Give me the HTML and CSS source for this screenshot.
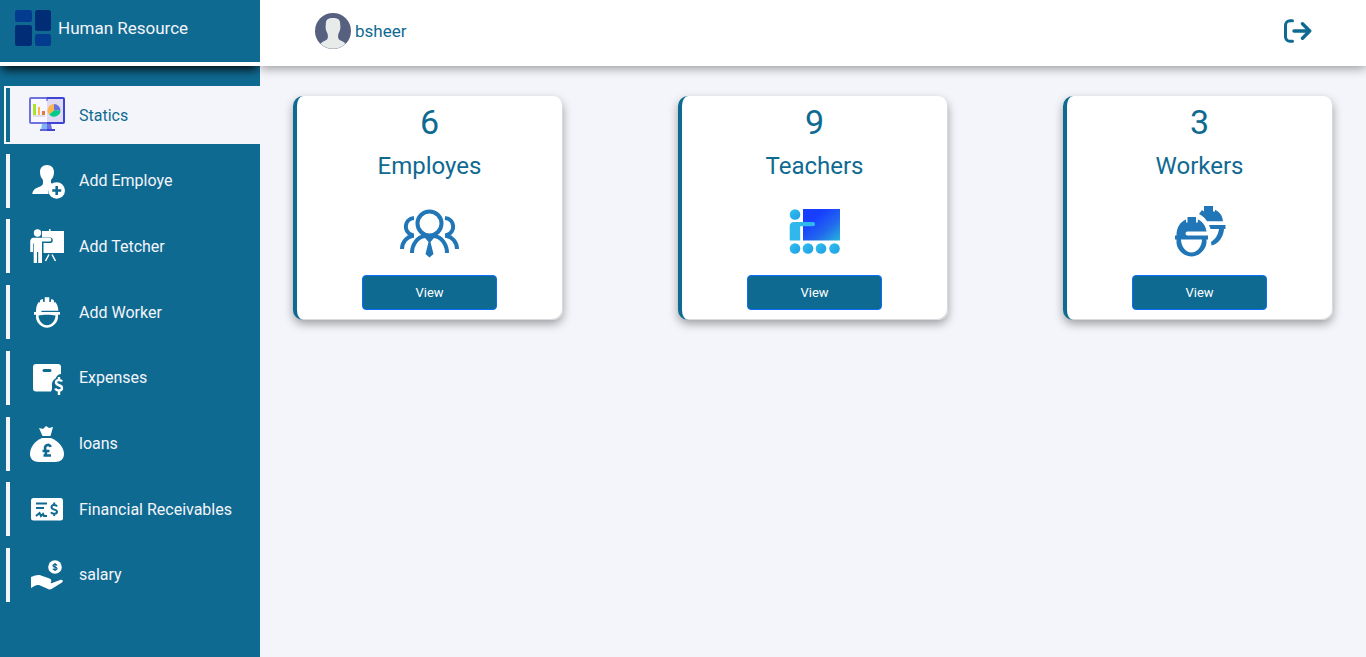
FILE: index.html
```html
<!DOCTYPE html>
<html lang="en">
<head>
<meta charset="utf-8">
<title>Human Resource</title>
<link rel="stylesheet" href="styles.css">
</head>
<body>
<div class="app">
  <aside class="sidebar">
    <div class="brand">
      <svg class="icon" viewBox="0 0 36 36" aria-hidden="true">
        <g fill="#033b8e"><rect width="17" height="12" rx="2.5"/><rect x="20" y="24" width="16" height="12" rx="2.5"/></g>
        <g fill="#002d76"><rect x="20" width="16" height="21" rx="2.5"/><rect y="15" width="17" height="21" rx="2.5"/></g>
      </svg>
      <span class="brand-name">Human Resource</span>
    </div>
    <nav class="menu">
      <a class="menu-item active" href="#">
        <svg class="icon" viewBox="0 0 36 36" aria-hidden="true">
          <path fill="#7db5fb" d="M13 27h5v6h-6z"/><path fill="#6d72df" d="M18 27h4l1 5.500h-5z"/>
          <path fill="#3d43cf" d="M18 32h8v2H18z"/><path fill="#5d65dc" d="M11 32h7v2h-7z"/>
          <path fill="#6d72df" d="M2 0h16v27H2a2 2 0 0 1-2-2V2a2 2 0 0 1 2-2z"/>
          <path fill="#3d43d5" d="M18 0h16a2 2 0 0 1 2 2v23a2 2 0 0 1-2 2H18z"/>
          <rect x="2" y="2" width="16" height="23" fill="#f8f7ff"/><rect x="18" y="2" width="16" height="23" fill="#dedbf3"/>
          <path fill="#e2dcef" d="M4 18h12v2H4z"/>
          <rect x="4" y="7" width="3" height="11" fill="#a9e428"/><rect x="9" y="10" width="2" height="8" fill="#ffb54f"/><rect x="13" y="14" width="3" height="4" fill="#e3793f"/>
          <path fill="#ffb54f" d="M25 13.500V7a6.500 6.500 0 0 0-5 10.500z"/><path fill="#6571dc" d="M25 13.500V7a6.500 6.500 0 0 1 6.500 6.500z"/><path fill="#00ca83" d="M25 13.500h6.500a6.500 6.500 0 0 1-11.300 4z"/>
          <path fill="#3d43d5" d="M17.500 1h1v3h-1z"/>
        </svg>
        <span>Statics</span>
      </a>
      <a class="menu-item" href="#">
        <svg class="icon" viewBox="0 0 36 36" aria-hidden="true">
          <path fill="#fff" d="M18 2c4.500 0 7 3 7 7 0 3-1 6-3 8v3l3 1.500a9 9 0 0 0-5.500 9.500H3.300c.4-4 3-5.500 6-6.700 3-1.200 4.700-2 4.700-4.300v-3c-2-2-3-5-3-8 0-4 2.500-7 7-7z"/>
          <circle cx="27.700" cy="27.500" r="8.300" fill="#fff"/><path d="M27.700 23v9M23.200 27.500h9" stroke="#0f6a92" stroke-width="2.600"/>
        </svg>
        <span>Add Employe</span>
      </a>
      <a class="menu-item" href="#">
        <svg class="icon" viewBox="0 0 36 36" aria-hidden="true">
          <path fill="#fff" d="M13 3h7V1h1.500v2H35v22H14.500V15h6.500a2.800 2.800 0 0 0 0-5.600h-8z"/>
          <circle cx="8.500" cy="5" r="3.700" fill="#fff"/>
          <path fill="#fff" d="M4.500 9.800H20.500a1.900 1.900 0 0 1 0 3.800H13V35H9.200V24H8v11H4.700V15.500H4V24H1.200V14c0-2.500 1-4.200 3.300-4.200z"/>
          <path fill="none" stroke="#fff" stroke-width="1.500" d="m20 26.500-3.500 6.500M23 26.500l3.500 6.500"/>
        </svg>
        <span>Add Tetcher</span>
      </a>
      <a class="menu-item" href="#">
        <svg class="icon" viewBox="0 0 36 36" aria-hidden="true">
          <path fill="#fff" fill-rule="evenodd" d="M15.700 3.300h4.600v4.700h1.400l.6-3c1.200.3 1.800.8 2.700 1.500v2l1.200-.6c2 2.300 3 5 3.200 8.800H13a.7.7 0 0 0 0 1.400h18v2.600h-2v3c-.5 5.500-6 10-11 10s-10.500-4.500-11-10v-3H5v-2.600h2c0-4.500.7-7.800 2.800-10.200l1.200.6v-2c.9-.7 1.500-1.200 2.700-1.500l.6 3h1.400zM9.500 21.500c0 5 4 9.700 8.500 9.700s8.500-4.700 8.500-9.700c-4-1-13-1-17 0z"/>
        </svg>
        <span>Add Worker</span>
      </a>
      <a class="menu-item" href="#">
        <svg class="icon" viewBox="0 0 36 36" aria-hidden="true">
          <path fill="#fff" fill-rule="evenodd" d="M7 4h22a3 3 0 0 1 3 3v7c-4 .5-4.500 3-5.500 4.500-2 1-3.500 3-3.500 5.500v5l-1 2.500H7a3 3 0 0 1-3-3V7a3 3 0 0 1 3-3zm8 5a1.500 1.500 0 0 0 0 3h6a1.500 1.500 0 0 0 0-3z"/>
          <path fill="none" stroke="#fff" stroke-width="2.400" d="M33 21.500c-1-2-6-2-6 1 0 3.500 6 2 6 5.500 0 3.300-5.500 3.200-6.800.500M30 17v3.500M30 30.500V35"/>
        </svg>
        <span>Expenses</span>
      </a>
      <a class="menu-item" href="#">
        <svg class="icon" viewBox="0 0 36 36" aria-hidden="true">
          <path fill="#fff" d="M10 2c2 .2 3 1 4 1l3-3 3 2 4-1-2.500 9h-8z"/>
          <path fill="#fff" d="M13 12h9c7 3 13 9 13 16 0 5-3.500 8-9 8H10c-5.500 0-9-3-9-8 0-7 5-13 12-16z"/>
          <path fill="none" stroke="#0f6a92" stroke-width="2.600" d="M21.500 21c-.500-3.300-5.500-2.500-5.500 1 0 2 1 3 1 5 0 1.500-.700 2.500-2.500 2.500H22M13.500 25h7"/>
        </svg>
        <span>loans</span>
      </a>
      <a class="menu-item" href="#">
        <svg class="icon" viewBox="0 0 36 36" aria-hidden="true">
          <rect x="2" y="7" width="32" height="22.500" rx="2.500" fill="#fff"/>
          <path fill="none" stroke="#0f6a92" stroke-width="2" d="M7 12.500h11M7 17h8M7 25l3.500-3 1.500 3 2-2 1 2h3"/>
          <path fill="none" stroke="#0f6a92" stroke-width="2" d="M28 15.500c-1-2-5.500-2-5.500.800 0 3 5.500 1.700 5.500 4.500s-5 2.500-6 .500M25.200 11.500v3M25.200 22v3"/>
        </svg>
        <span>Financial Receivables</span>
      </a>
      <a class="menu-item" href="#">
        <svg class="icon" viewBox="0 0 36 36" aria-hidden="true">
          <circle cx="26" cy="10" r="6.800" fill="#fff"/>
          <path fill="none" stroke="#0f6a92" stroke-width="1.300" d="M28 8.500c-.700-1.500-4-1.500-4 .300 0 2 4 .7 4 2.700 0 1.700-3.500 1.500-4.200.200M26 6v8"/>
          <path fill="#fff" d="M2 20c4-1.500 7-2.500 10-1.500l8.500 3c2 .8 2.500 3 1 4.300l1 .4L31 23c2.500-.7 3.800 1 2 2.500L22.500 32c-1.500.8-3 .4-4.500-.500L10 28c-3-.5-5 1-8 3z"/>
        </svg>
        <span>salary</span>
      </a>
    </nav>
  </aside>
  <div class="content">
    <header class="topbar">
      <div class="user">
        <svg class="icon" viewBox="0 0 36 36" aria-hidden="true">
          <circle cx="18" cy="18" r="18" fill="#56607f"/>
          <path fill="#e7eceb" d="M18 5c5 0 7.500 1.500 7.200 7 .6 3-.2 6-1.700 8.500-.700 3-.5 5 .5 6 2 1.500 4.500 2 6.500 4.300a18 18 0 0 1-25 0c2-2.300 4.500-2.800 6.500-4.300 1-1 1.200-3 .5-6-1.500-2.500-2.300-5.500-1.700-8.500C10.500 6.500 13 5 18 5z"/>
        </svg>
        <span>bsheer</span>
      </div>
      <button class="logout" type="button" aria-label="Log out">
        <svg class="logout-icon" viewBox="0 0 28 24" aria-hidden="true"><path fill="none" stroke="#0f6a92" stroke-width="3" stroke-linecap="round" stroke-linejoin="round" d="M8.500 1.700H6a4.500 4.500 0 0 0-4.500 4.500v11.500A4.500 4.500 0 0 0 6 22.300h2.500"/><path fill="none" stroke="#0f6a92" stroke-width="3.400" stroke-linecap="round" stroke-linejoin="round" d="M10 12h15.500M18.500 4.800l7.200 7.200-7.200 7.200"/></svg>
      </button>
    </header>
    <main class="cards">
      <section class="card">
        <p class="count">6</p>
        <h2 class="label">Employes</h2>
        <svg class="picture" viewBox="0 0 60 60" aria-hidden="true">
          <g fill="none" stroke="#2076b6" stroke-width="4">
            <circle cx="29.500" cy="21.500" r="12"/>
            <path d="M12 51c0-8 5-16 13-17M47 51c0-8-5-16-13-17"/>
            <path d="M14 16c-10 1-11 14-2 17v1c-5 1-10 6-10 13M45 16c10 1 11 14 2 17v1c5 1 10 6 10 13"/>
          </g>
          <path fill="#2076b6" d="M22.500 33h14L30.500 40l3 12-4 3.500-4-3.500 3-12z"/>
        </svg>
        <button class="view" type="button">View</button>
      </section>
      <section class="card">
        <p class="count">9</p>
        <h2 class="label">Teachers</h2>
        <svg class="picture" viewBox="0 0 60 60" aria-hidden="true">
          <defs>
            <linearGradient id="board" x2="1" y2="1"><stop offset=".3" stop-color="#183fff"/><stop offset=".65" stop-color="#2269ed"/><stop offset="1" stop-color="#23b5dc"/></linearGradient>
            <linearGradient id="person" x2="1" y2="1"><stop stop-color="#32c0ee"/><stop offset="1" stop-color="#1f9ee5"/></linearGradient>
          </defs>
          <path fill="url(#board)" d="M18 7h37v31.500H18z"/>
          <g fill="url(#person)"><circle cx="10" cy="12.500" r="5.300"/><circle cx="10" cy="46.500" r="5.300"/><circle cx="23" cy="46.500" r="5.300"/><circle cx="36" cy="46.500" r="5.300"/><circle cx="49.500" cy="46.500" r="5.300"/></g>
          <path fill="#30b7ec" d="M9 20h19a2 2 0 0 1 0 4.300H15.200v14.200H4.700V24.500C4.700 21.500 6 20 9 20z"/>
        </svg>
        <button class="view" type="button">View</button>
      </section>
      <section class="card">
        <p class="count">3</p>
        <h2 class="label">Workers</h2>
        <svg class="picture" viewBox="0 0 60 60" aria-hidden="true">
          <path fill="#2076b6" d="M34 4h9v5.500h2V7.800c5 2.200 7.500 6 8 11.500H37c-1.500-3-4.500-5.300-8-7.300l3-4 2 1.500z"/>
          <path fill="#2076b6" d="M39 23h16.500v4H54C53.500 35 48.500 42 41.500 43.500L41 40c4.500-3 7-7 8-13h-8.500z"/>
          <path fill="#2076b6" fill-rule="evenodd" d="M17.500 15H26v5.500h1.800v-3c5 2 8 6.500 8.700 12H17.500a2 2 0 0 0 0 4H38v4h-1.500V40c0 7-7 14.500-15 14.500S6.500 47 6.500 40.500v-3H5v-4h1.500c0-8 3.500-13.500 9.500-16v3h1.500zM11 37.500c0 7 5 13 10.500 13S32 44.500 32 37.500z"/>
        </svg>
        <button class="view" type="button">View</button>
      </section>
    </main>
  </div>
</div>
</body>
</html>
```
FILE: styles.css
```css
* {
  box-sizing: border-box;
}

body {
  margin: 0;
  background: #f4f5fa;
  color: #0f6a92;
  font-family: Roboto, "Open Sans", sans-serif;
}

.app {
  display: flex;
  min-height: 100vh;
}

.icon {
  width: 36px;
  height: 36px;
  flex: none;
}

.sidebar {
  display: flex;
  flex-direction: column;
  flex: 0 0 260px;
  background: #0f6a92;
}

.brand {
  display: flex;
  align-items: center;
  gap: 7px;
  height: 66px;
  padding: 0 15px 6px;
  border-bottom: 4px solid #fff;
  box-shadow: 0 5px 10px -2px #000;
  color: #f4f5fa;
  font-size: 17px;
}

.menu {
  display: flex;
  flex: 1;
  flex-direction: column;
  justify-content: space-between;
  padding: 22px 0 55px 6px;
}

.menu-item {
  display: flex;
  align-items: center;
  gap: 14px;
  height: 54px;
  padding-left: 19px;
  border-left: 4px solid #f4f5fa;
  color: #f4f5fa;
  font-size: 16px;
  text-decoration: none;
}

.menu-item.active {
  border-left-color: #0f6a92;
  outline: 2px solid #f4f5fa;
  background: #f4f5fa;
  color: #0f6a92;
}

.content {
  position: relative;
  flex: 1;
  background: #f4f5fa;
}

.topbar {
  display: flex;
  align-items: center;
  justify-content: space-between;
  height: 66px;
  padding: 0 54px 4px 55px;
  background: #fff;
  box-shadow: 0 2px 10px rgba(0, 0, 0, 0.4);
  clip-path: inset(0 0 -20px 0);
}

.user {
  display: flex;
  align-items: center;
  gap: 4px;
  font-size: 17px;
}

.logout {
  padding: 0;
  border: 0;
  background: none;
}

.logout-icon {
  display: block;
  width: 28px;
  height: 24px;
}

.cards {
  display: flex;
  flex-wrap: wrap;
  justify-content: space-between;
  gap: 30px;
  padding: 30px 33px;
}

.card {
  display: flex;
  flex-direction: column;
  align-items: center;
  width: 270px;
  padding: 0 1px 10px 0;
  border-left: 4px solid #0f6a92;
  border-radius: 10px;
  background: #fff;
  box-shadow: 0 4px 10px rgba(0, 0, 0, 0.35), inset -1px -1px 0 #d9dadd;
}

.count {
  margin: 0;
  font-size: 34px;
  line-height: 52px;
}

.label {
  margin: 0 0 18px;
  font-size: 24px;
  font-weight: 400;
  line-height: 36px;
}

.picture {
  width: 60px;
  height: 60px;
  margin-bottom: 13px;
}

.view {
  width: 135px;
  height: 35px;
  border: 1px solid #0d6efd;
  border-radius: 4px;
  background: #0f6a92;
  color: #fff;
  font-family: inherit;
  font-size: 13px;
}
```
